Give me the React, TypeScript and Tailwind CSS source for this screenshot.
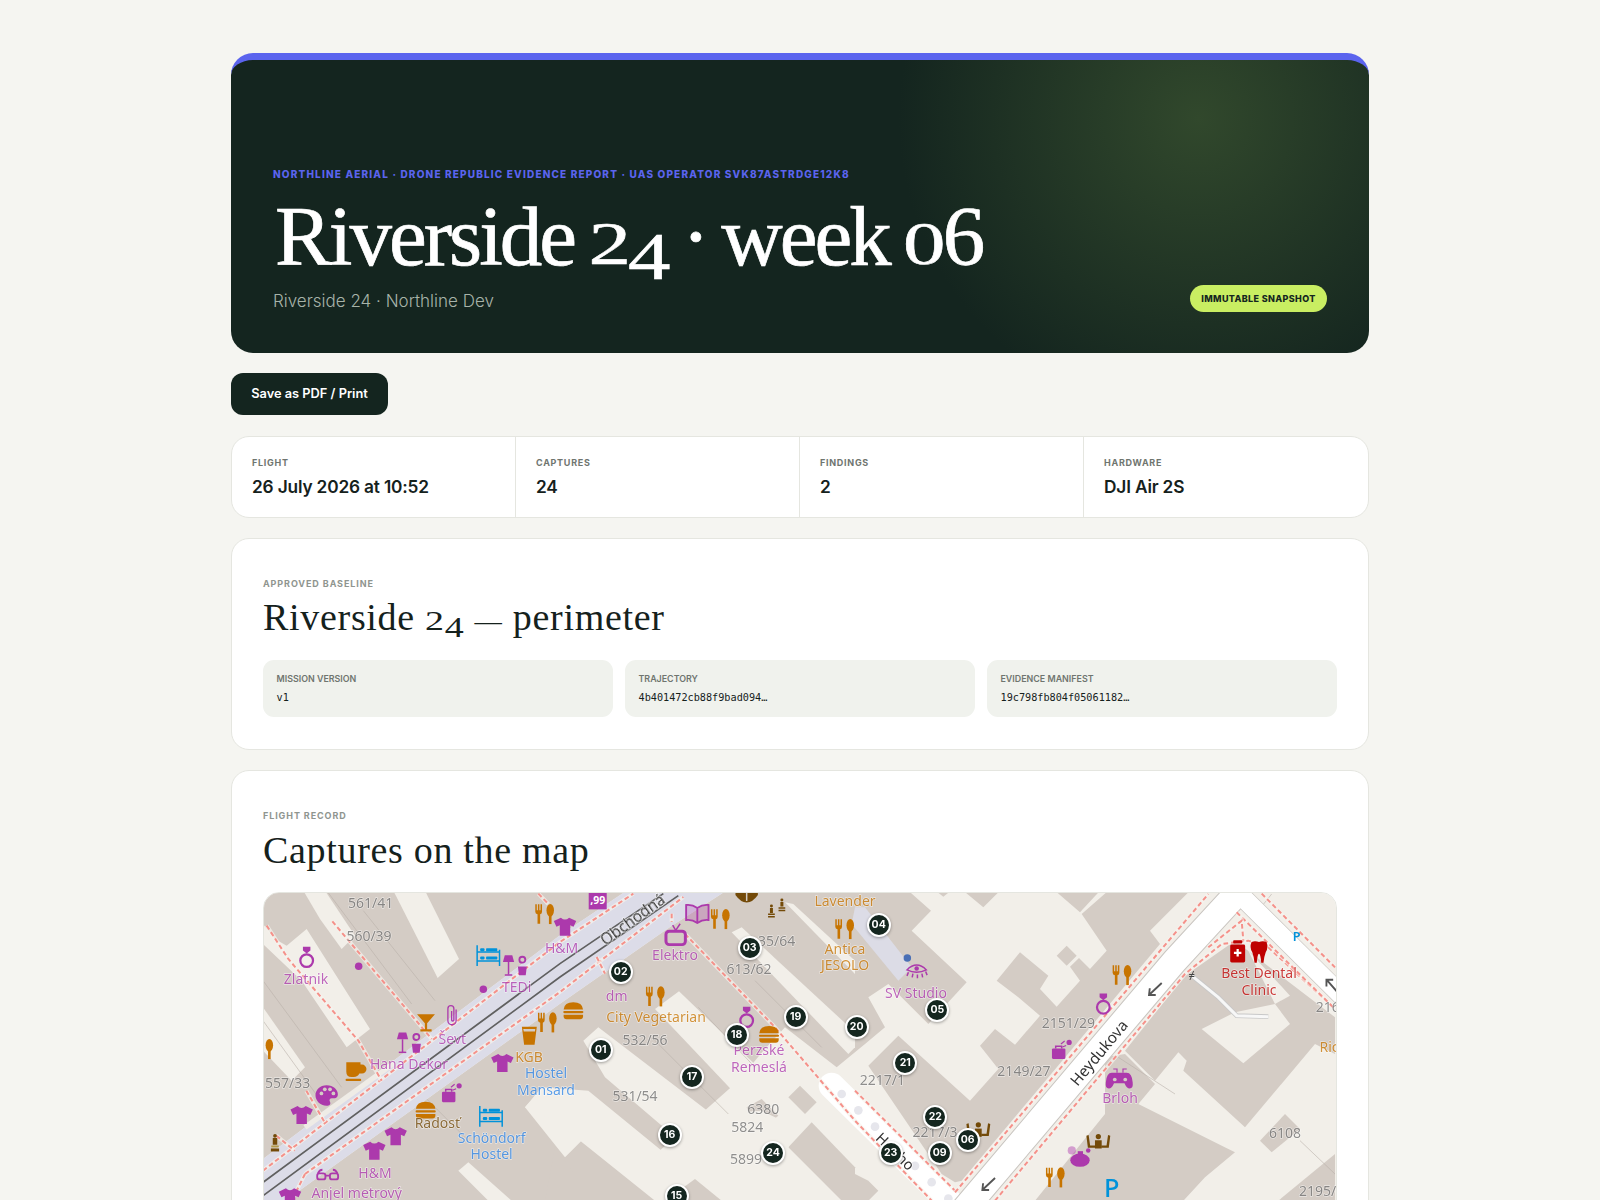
import * as React from "react"

const PURPLE = "#ac39ac"
const ORANGE = "#c77400"
const BLUE = "#0092da"
const RED = "#bf0000"
const BROWN = "#734a08"
const TAN = "#d4ccc5"
const LIGHT = "#f2efe9"

// old style figures, the serif we have only ships lining ones
const Osf = ({ text }: { text: string }) => (
  <>
    {text.split("").map((c, i) => {
      if (c === "2" || c === "0")
        return <span key={i} className="inline-block origin-[50%_79%] scale-y-[0.72]">{c}</span>
      if (c === "4")
        return <span key={i} className="inline-block origin-[50%_79%] translate-y-[0.17em] scale-y-[0.8]">{c}</span>
      if (c === "—") return <span key={i} className="text-[0.72em]">{c}</span>
      return <React.Fragment key={i}>{c}</React.Fragment>
    })}
  </>
)

const stats = [
  { label: "FLIGHT", value: "26 July 2026 at 10:52" },
  { label: "CAPTURES", value: "24" },
  { label: "FINDINGS", value: "2" },
  { label: "HARDWARE", value: "DJI Air 2S" },
]

const baseline = [
  { label: "MISSION VERSION", value: "v1" },
  { label: "TRAJECTORY", value: "4b401472cb88f9bad094…" },
  { label: "EVIDENCE MANIFEST", value: "19c798fb804f05061182…" },
]

// page coordinates of the capture pins
const pins: [string, number, number][] = [
  ["01", 600.7, 1049],
  ["02", 620.7, 971],
  ["03", 749.7, 947.7],
  ["04", 878.7, 924.3],
  ["05", 937.3, 1009.7],
  ["06", 967.7, 1139],
  ["09", 939.7, 1152.3],
  ["15", 676.7, 1195],
  ["16", 669.7, 1134.3],
  ["17", 692, 1076.7],
  ["18", 736.7, 1034.3],
  ["19", 795.7, 1016.7],
  ["20", 856.7, 1026.7],
  ["21", 905.3, 1062.3],
  ["22", 935.3, 1116.7],
  ["23", 890.7, 1152.3],
  ["24", 773, 1152.3],
]

const icons: Record<string, React.ReactNode> = {
  shirt: <path fill={PURPLE} d="M-11 -24 L-30 -15 L-23 0 L-14 -4 L-14 24 L14 24 L14 -4 L23 0 L30 -15 L11 -24 Q0 -14 -11 -24Z" />,
  forks: (
    <g fill={ORANGE}>
      <path d="M-26 -26h4v16h3v-16h4v16h3v-16h4v20q0 6-5 7v25h-7v-25q-6-1-6-7z" />
      <ellipse cx="14" cy="-10" rx="10" ry="17" />
      <rect x="10.5" y="4" width="7" height="23" />
    </g>
  ),
  knife: (
    <g fill={ORANGE}>
      <ellipse cy="-10" rx="10" ry="17" />
      <rect x="-3.5" y="4" width="7" height="23" />
    </g>
  ),
  hostel: (
    <g fill={BLUE}>
      <path d="M-30 -28v56M30 -16v44M-30 -10h60M-30 14h60" stroke={BLUE} strokeWidth="4" fill="none" />
      <rect x="-22" y="-20" width="12" height="8" rx="3" />
      <rect x="-6" y="-20" width="30" height="8" rx="2" />
      <rect x="-22" y="2" width="12" height="8" rx="3" />
      <rect x="-6" y="2" width="30" height="8" rx="2" />
    </g>
  ),
  burger: (
    <g fill={ORANGE}>
      <path d="M-26 -5q2 -19 26 -19t26 19z" />
      <rect x="-27" y="-1" width="54" height="6" rx="3" />
      <path d="M-26 9h52v4q0 8-8 8h-36q-8 0-8-8z" />
    </g>
  ),
  ring: (
    <g fill={PURPLE}>
      <circle cy="7" r="17" fill="none" stroke={PURPLE} strokeWidth="6" />
      <path d="M-10 -30h20v10l-10 8-10-8z" />
    </g>
  ),
  lamps: (
    <g fill={PURPLE}>
      <path d="M-30 -28h20l5 18h-30z" />
      <rect x="-22" y="-10" width="4" height="34" />
      <rect x="-30" y="23" width="20" height="4" />
      <circle cx="17" cy="-16" r="8" fill="none" stroke={PURPLE} strokeWidth="5" />
      <path d="M5 2h24l-3 24h-18z" />
    </g>
  ),
  clip: <path d="M11 -14v30a11 11 0 0 1-22 0v-32a8 8 0 0 1 16 0v30a3 3 0 0 1-6 0v-24" fill="none" stroke={PURPLE} strokeWidth="3.5" />,
  cocktail: <path fill={ORANGE} d="M-24 -24h48l-21 24v16h12v6h-30v-6h12v-16z" />,
  coffee: (
    <g fill={ORANGE}>
      <path d="M-26 -24h38v6h4a11 11 0 0 1 0 24h-7q-4 9-15 9h-6q-14 0-14-14z" />
      <rect x="-28" y="20" width="42" height="6" rx="3" />
    </g>
  ),
  beer: <path fill={ORANGE} d="M-20 -24h40l-6 48h-28z M-16 -18l1 7h30l1-7z" fillRule="evenodd" />,
  palette: (
    <g>
      <path fill={PURPLE} d="M0 -28c18 0 30 12 30 24 0 10-8 12-16 11-6 0-8 5-5 10 3 6-2 10-9 10-18 0-30-14-30-28s12-27 30-27z" />
      <circle cx="-14" cy="-6" r="5" fill={TAN} />
      <circle cx="-5" cy="-17" r="5" fill={TAN} />
      <circle cx="9" cy="-17" r="5" fill={TAN} />
      <circle cx="18" cy="-6" r="5" fill={TAN} />
    </g>
  ),
  book: <path d="M0 -16q-14 -10 -30 -8v40q16 -2 30 8q14 -10 30 -8v-40q-16 -2 -30 8zM0 -16v40" fill={PURPLE} fillOpacity="0.25" stroke={PURPLE} strokeWidth="5" />,
  tv: (
    <g fill="none" stroke={PURPLE}>
      <rect x="-26" y="-12" width="52" height="36" rx="9" strokeWidth="8" />
      <path d="M-8 -28L0 -14L12 -32" strokeWidth="4" />
    </g>
  ),
  tooth: <path fill={RED} d="M-20 -28q10 -4 20 0q10 -4 20 0q6 14 -2 28q-4 10 -6 28h-6q-2 -24 -6 -24t-6 24h-6q-2 -18 -6 -28q-8 -14 -2 -28z" />,
  medkit: (
    <g>
      <rect x="-20" y="-18" width="40" height="48" rx="4" fill={RED} />
      <rect x="-12" y="-30" width="24" height="9" rx="2" fill={RED} />
      <path d="M-3 -6h6v7h7v6h-7v7h-6v-7h-7v-6h7z" fill="#fff" />
    </g>
  ),
  game: (
    <g fill={PURPLE}>
      <path d="M-18 -14h36q14 0 16 26q2 16 -8 16q-8 0-14-14h-28q-6 14-14 14q-10 0-8-16q2-26 16-26z" />
      <path d="M-8 -14v-10h-10M8 -14v-10h10" fill="none" stroke={PURPLE} strokeWidth="3" />
      <circle cx="-14" cy="4" r="5" fill={TAN} />
      <circle cx="14" cy="4" r="5" fill={TAN} />
    </g>
  ),
  perfume: (
    <g fill={PURPLE}>
      <ellipse cy="12" rx="26" ry="18" />
      <rect x="-6" y="-12" width="14" height="10" />
      <circle cx="22" cy="-14" r="6" />
      <circle cx="-22" cy="-14" r="11" opacity="0.45" />
    </g>
  ),
  bag: (
    <g fill={PURPLE}>
      <rect x="-26" y="-6" width="36" height="28" rx="3" />
      <path d="M-16 -6v-6h16v6" fill="none" stroke={PURPLE} strokeWidth="4" />
      <circle cx="20" cy="-22" r="7" />
      <path d="M-2 -18l10-8M2 -10l10-4" stroke={PURPLE} strokeWidth="3" />
    </g>
  ),
  glasses: (
    <g fill="none" stroke={PURPLE} strokeWidth="5">
      <rect x="-28" y="-6" width="22" height="16" rx="6" />
      <rect x="6" y="-6" width="22" height="16" rx="6" />
      <path d="M-6 0h12M-26 -6q4 -10 12 -10M26 -6q-4 -10 -12 -10" />
    </g>
  ),
  eye: (
    <g fill="none" stroke={PURPLE} strokeWidth="4">
      <path d="M-26 -2q26 -26 52 0q-26 12 -52 0z" />
      <circle cy="-6" r="6" fill={PURPLE} stroke="none" />
      <path d="M-22 4l-4 10M-10 8l-2 10M2 10v10M14 8l2 10M24 2l4 10" />
    </g>
  ),
  statue: (
    <g fill={BROWN}>
      <circle cy="-22" r="5" />
      <path d="M-6 -16h12v18h-12z" />
      <rect x="-10" y="4" width="20" height="5" fill="#b49a4a" />
      <rect x="-11" y="12" width="22" height="8" />
    </g>
  ),
  statues: (
    <g fill={BROWN}>
      <circle cx="-14" cy="-8" r="4" />
      <path d="M-18 -3h8v14h-8zM-23 12h18v4h-18zM-23 19h18v4h-18z" />
      <circle cx="14" cy="-24" r="4" />
      <path d="M10 -19h8v12h-8zM5 -5h18v4h-18zM5 2h18v4h-18z" />
    </g>
  ),
  hands: (
    <g fill={BROWN}>
      <circle cy="-20" r="7" />
      <rect x="-9" y="-10" width="18" height="22" />
      <path d="M-26 -24l4 28h14v6h-20l-4-32zM26 -24l-4 28h-14v6h20l4-32z" />
    </g>
  ),
  shelf: (
    <g fill={BROWN}>
      <path d="M-30 -22h60v14q-14 20-30 20t-30-20z" />
      <rect x="-2" y="-22" width="4" height="30" fill={TAN} />
    </g>
  ),
  price: (
    <g>
      <rect x="-24" y="-24" width="48" height="44" fill={PURPLE} />
      <text textAnchor="middle" y="8" fontSize="28" fill="#fff" fontWeight="700" fontFamily="Noto Sans, sans-serif">,99</text>
    </g>
  ),
  dot: <circle r="10" fill={PURPLE} />,
  bluedot: <circle r="10" fill="#4a6fb5" />,
  arrow: <path d="M18 -16L-14 14M2 16L-16 16L-14 -2" stroke="#555" strokeWidth="5" fill="none" />,
  arrowUp: <path d="M16 18L-12 -14M-14 2L-14 -16L4 -16" stroke="#555" strokeWidth="5" fill="none" />,
}

const placed: [string, number, number][] = [
  ["ring", 155, 232], ["dot", 311, 257], ["hostel", 700, 225], ["lamps", 783, 255], ["dot", 685, 326],
  ["forks", 870, 100], ["clip", 591, 402], ["cocktail", 513, 428], ["lamps", 465, 487], ["shirt", 742, 547],
  ["forks", 878, 425], ["beer", 823, 465], ["coffee", 303, 572], ["palette", 215, 645], ["shirt", 140, 703],
  ["knife", 43, 505], ["statue", 60, 790], ["bag", 590, 640], ["burger", 512, 690], ["hostel", 708, 707], ["shirt", 422, 767],
  ["shirt", 358, 810], ["glasses", 218, 885], ["shirt", 105, 950],
  ["price", 1028, 62], ["shirt", 930, 138], ["book", 1327, 100], ["forks", 1397, 115], ["shelf", 1475, 52],
  ["statues", 1565, 85], ["tv", 1262, 165], ["forks", 1770, 145], ["forks", 1202, 347], ["burger", 955, 392],
  ["ring", 1475, 412], ["burger", 1542, 463],
  ["eye", 1985, 270], ["bluedot", 1957, 232], ["ring", 2545, 372], ["bag", 2420, 510], ["hands", 2170, 755],
  ["forks", 2402, 890], ["perfume", 2475, 825], ["hands", 2530, 790],
  ["forks", 2602, 283], ["medkit", 2948, 212], ["tooth", 3012, 215], ["game", 2595, 592],
  ["arrow", 2700, 325], ["arrow", 2200, 910], ["arrowUp", 3230, 315],
]

type Label = [string, number, number, string]
const GREY = "#6e6e6e"
const labels: Label[] = [
  ["561/41", 347, 70, GREY], ["560/39", 342, 170, GREY], ["557/33", 98, 610, GREY],
  ["35/64", 1565, 185, GREY], ["613/62", 1482, 270, GREY], ["532/56", 1170, 482, GREY],
  ["531/54", 1140, 650, GREY], ["6380", 1525, 690, GREY], ["5824", 1477, 742, GREY], ["5899", 1473, 840, GREY],
  ["2151/29", 2440, 432, GREY], ["2149/27", 2307, 575, GREY], ["2217/1", 1882, 603, GREY], ["2217/3", 2040, 758, GREY],
  ["216", 3218, 382, GREY], ["6108", 3090, 760, GREY], ["2195/", 3188, 935, GREY],
  ["Zlatnik", 153, 298, PURPLE], ["TEDi", 785, 322, PURPLE], ["Ševt", 592, 480, PURPLE], ["Hana Dekor", 462, 555, PURPLE],
  ["H&M", 360, 882, PURPLE], ["Anjel metrový", 305, 940, PURPLE], ["H&M", 920, 205, PURPLE], ["Elektro", 1260, 227, PURPLE],
  ["dm", 1085, 350, PURPLE], ["Perzské", 1512, 513, PURPLE], ["Remeslá", 1512, 563, PURPLE], ["SV Studio", 1983, 340, PURPLE],
  ["Brloh", 2595, 655, PURPLE],
  ["KGB", 822, 532, ORANGE], ["City Vegetarian", 1203, 412, ORANGE], ["Lavender", 1770, 65, ORANGE], ["Antica", 1770, 208, ORANGE],
  ["JESOLO", 1770, 258, ORANGE], ["Ric", 3222, 503, ORANGE], ["Radosť", 547, 732, BROWN],
  ["Hostel", 873, 580, "#2b84e8"], ["Mansard", 873, 632, "#2b84e8"], ["Schöndorf", 710, 775, "#2b84e8"], ["Hostel", 710, 825, "#2b84e8"],
  ["Best Dental", 3012, 282, RED], ["Clinic", 3012, 333, RED],
]

const tan = [
  "24,30 1115,30 915,164 24,835",
  "24,1400 24,1008 915,369 1245,139 1414,30 1960,30 2028,90 1970,150 2135,305 2020,430 1900,310 1840,350 1890,440 1830,490 1745,560 1590,440 1525,510 1450,600 1180,840 1300,1400",
  // block between the courtyard and Heydukova
  "1840,555 1930,465 2145,660 2230,565 2175,495 2220,445 2280,492 2355,405 2290,350 2225,300 2295,215 2380,285 2355,325 2405,378 2475,300 2445,258 2472,232 2505,265 2555,210 2480,100 2560,30 2805,30 2685,150 2715,190 2120,900 2100,905 2060,880",
  "2042,30 2065,48 2088,30",
  "2125,30 2185,80 2235,30",
  "2400,30 2535,30 2475,95",
  "2405,225 2435,195 2465,225 2435,255",
  "1800,880 1840,900 1870,930 1840,960 1800,960",
  // small blocks on the light strip
  "1600,650 1635,615 1685,665 1650,700",
  "1475,680 1520,655 1570,705 1500,760",
  "1460,845 1510,800 1540,850 1490,895",
  "1600,800 1670,725 1800,860 1800,1000 1690,1000",
  "1230,960 1320,895 1400,960",
  "900,800 980,910 920,970 870,960",
  // south of Heydukova
  "2610,510 2790,285 2940,180 3240,410 3240,520 3180,490 2970,740 2785,570 2795,540 2770,515 2700,600",
  "2550,530 2610,520 2700,610 2650,670 2940,815 2850,890 2785,960 2340,960 2550,700",
  "3015,780 3090,700 3135,745 3050,815",
  "3240,820 3070,960 3240,960",
]

const light = [
  "24,130 60,175 95,195 155,145 345,445 275,500 140,300 24,190",
  "145,30 210,30 300,165 260,205 195,115",
  "415,30 510,30 612,235 548,292",
  "24,380 150,560 110,600 24,510",
  "610,870 640,845 770,960 700,960",
  "810,680 865,620 900,670 990,770 930,830",
  // long strips running towards Hodzova
  "1200,385 1272,332 1540,590 1470,670",
  "985,480 1030,440 1370,700 1520,690 1620,740 1600,800 1800,1000 1460,1000 1320,820 1050,590",
  "810,680 860,620 1000,630 1275,855 1240,960 1200,960 900,720",
  "1430,155 1460,140 1800,455 1800,500 1780,520",
  "1590,65 1615,70 1800,240 1800,280",
  "3105,700 3185,615 3240,660 3240,760 3215,810",
]

const lines = [
  "215,30 470,370", "325,90 540,360", "24,300 260,620", "24,420 190,650", "480,620 640,780",
  "1200,480 1420,700", "1330,380 1500,560", "1500,300 1700,500",
  "2590,530 2760,640", "3135,780 3240,880", "3050,40 3010,90",
]

const Dashed = ({ points }: { points: string }) => (
  <g fill="none">
    <polyline points={points} stroke="#f7f4ee" strokeWidth="12" opacity="0.7" />
    <polyline points={points} stroke="#f5918a" strokeWidth="6" strokeDasharray="14 9" />
  </g>
)

const MapArt = () => (
  <svg viewBox="27 37 3216 1320" className="block h-full w-full blur-[0.5px]" preserveAspectRatio="xMinYMin slice">
    <rect x="0" y="0" width="3300" height="1400" fill={LIGHT} />
    {tan.map((p, i) => <polygon key={i} points={p} fill={TAN} />)}
    {light.map((p, i) => <polygon key={i} points={p} fill={LIGHT} />)}
    <polygon points="2980,210 3105,345 3060,370 2940,395 2840,445 2965,548 3105,430 3060,370" fill={LIGHT} />
    {lines.map((l, i) => <polyline key={i} points={l} fill="none" stroke="#b8b0a8" strokeWidth="2.5" opacity="0.7" />)}

    {/* pedestrian area by the pins 04 */}
    <polygon points="1800,80 1830,80 1970,260 1930,300 1790,130" fill="#dcdce6" />

    {/* Obchodna */}
    <polygon points="24,835 915,164 1115,30 1414,30 1245,139 915,369 24,1008" fill="#dcdce8" />
    <polyline points="150,740 420,545" fill="none" stroke="#efece6" strokeWidth="16" />
    <polyline points="24,905 915,249 1225,39" fill="none" stroke="#606060" strokeWidth="5" />
    <polyline points="24,945 915,289 1270,45" fill="none" stroke="#606060" strokeWidth="5" />

    {/* Hodzova, Heydukova and the cross street */}
    <polyline points="1730,615 2150,1030" fill="none" stroke="#fff" strokeWidth="78" strokeLinecap="round" />
    {[1760, 1810, 1860, 1980, 2030, 2080].map((x) => <circle key={x} cx={x} cy={640 + (x - 1760) * 0.98} r="13" fill="#e6e6ec" />)}
    <polyline points="2120,995 2760,240 2945,39 2955,25" fill="none" stroke="#c9c5c0" strokeWidth="82" />
    <polyline points="2930,17 3260,345" fill="none" stroke="#c9c5c0" strokeWidth="60" />
    <polyline points="2120,995 2760,240 2945,39 2955,25" fill="none" stroke="#fff" strokeWidth="76" />
    <polyline points="2930,17 3260,345" fill="none" stroke="#fff" strokeWidth="56" />

    <Dashed points="24,870 915,184 1135,39" />
    <Dashed points="150,880 915,334 1285,49" />
    <Dashed points="35,135 100,235 310,480 380,600" />
    <Dashed points="232,122 530,475" />
    <Dashed points="850,39 880,70" />
    <Dashed points="154,630 209,725" />
    <Dashed points="64,765 119,810" />
    <Dashed points="150,880 110,960" />
    <Dashed points="1025,229 1050,279" />
    <Dashed points="1250,99 1250,124" />
    <Dashed points="1290,160 1560,440 1800,720 2030,960" />
    <Dashed points="1800,630 2100,930" />
    <Dashed points="2100,935 2860,40" />
    <Dashed points="2220,960 2790,280 2900,190 2980,180 3040,200 3240,385" />
    <Dashed points="2945,95 3240,385" />
    <Dashed points="2860,200 2960,120 2965,180" />
    <Dashed points="3020,39 3240,260" />

    {/* service path */}
    <polyline points="2810,285 2890,350 2945,405 3040,408" fill="none" stroke="#c8c8c8" strokeWidth="14" />
    <polyline points="2810,285 2890,350 2945,405 3040,408" fill="none" stroke="#f7f7f7" strokeWidth="9" />
    <text x="2810" y="295" textAnchor="middle" fontSize="34" fill="#444" fontFamily="Noto Sans, sans-serif">≠</text>

    {placed.map(([name, x, y], i) => <g key={i} transform={`translate(${x} ${y}) scale(1.12)`}>{icons[name]}</g>)}

    <g fontFamily="Noto Sans, sans-serif" fontSize="42" textAnchor="middle" dominantBaseline="middle" strokeLinejoin="round" style={{ paintOrder: "stroke" }}>
      {labels.map(([t, x, y, c], i) => <text key={i} x={x} y={y} fill={c} opacity="0.75" stroke="#fff" strokeOpacity="0.7" strokeWidth="4">{t}</text>)}
      <text x="3125" y="172" fill={BLUE} fontSize="38" fontWeight="600">P</text>
      <text x="2570" y="930" fill={BLUE} fontSize="76" fontWeight="500">P</text>
      <text transform="translate(1135 120) rotate(-36)" fill="#333" fontSize="46" stroke="#fff" strokeOpacity="0.8" strokeWidth="5">Obchodná</text>
      <text transform="translate(2535 519) rotate(-50)" fill="#333" fontSize="46" stroke="#fff" strokeOpacity="0.8" strokeWidth="5">Heydukova</text>
      <text transform="translate(1918 815) rotate(44)" fill="#333" fontSize="44" stroke="#fff" strokeOpacity="0.8" strokeWidth="5">Hodho</text>
    </g>
  </svg>
)

const Label = ({ children }: { children: React.ReactNode }) => (
  <div className="text-[9px] font-bold leading-3 tracking-[0.1em] text-[#8f958f]">{children}</div>
)

export default function App() {
  return (
    <div className="min-h-screen bg-[#f5f5f1] font-['Inter',sans-serif] text-[#15211c]">
      <div className="mx-auto flex w-[1138px] flex-col gap-5 pt-[53px] pb-10">
        <header className="flex h-[300px] items-end justify-between rounded-[22px] border-t-[7px] border-[#5b64ee] bg-[radial-gradient(circle_300px_at_85%_20%,#31482c,#14251f)] px-[42px] pb-[41px]">
          <div>
            <div className="text-[10px] font-extrabold leading-4 tracking-[0.117em] text-[#5b64ee]">
              NORTHLINE AERIAL · DRONE REPUBLIC EVIDENCE REPORT · UAS OPERATOR SVK87ASTRDGE12K8
            </div>
            <h1 className="mt-3 ml-[2px] h-[84px] font-['Liberation_Serif',serif] text-[85px] leading-[84px] tracking-[-0.035em] text-white [word-spacing:-4px] [-webkit-text-stroke:0.7px_white]">
              <Osf text="Riverside 24 · week 06" />
            </h1>
            <p className="mt-[10px] translate-y-px text-[17px] font-light leading-6 text-[#a7b3a9]">Riverside 24 · Northline Dev</p>
          </div>
          <span className="flex h-[27px] w-[137px] items-center justify-center rounded-full bg-[#c9ee62] text-[9px] font-extrabold tracking-[0.04em] text-[#15261f]">
            IMMUTABLE SNAPSHOT
          </span>
        </header>

        <button className="mb-px h-[42px] w-[157px] rounded-[12px] bg-[#14251f] text-[12.8px] font-semibold text-white">
          Save as PDF / Print
        </button>

        <section className="grid h-[82px] grid-cols-4 rounded-[18px] border border-[#e5e6e0] bg-white">
          {stats.map((s, i) => (
            <div key={s.label} className={i ? "-ml-px border-l border-[#e5e6e0] pt-5 pl-5" : "pt-5 pl-5"}>
              <div className="text-[9px] font-bold leading-3 tracking-[0.08em] text-[#6f756f]">{s.label}</div>
              <div className="mt-[6px] text-[17.3px] font-semibold leading-6 tracking-[-0.01em]">{s.value}</div>
            </div>
          ))}
        </section>

        <section className="h-[212px] rounded-[18px] border border-[#e5e6e0] bg-white px-[31px] pt-[39px]">
          <Label>APPROVED BASELINE</Label>
          <h2 className="mt-[4px] h-[46px] font-['Liberation_Serif',serif] text-[38px] leading-[46px] tracking-[0.018em]">
            <Osf text="Riverside 24 — perimeter" />
          </h2>
          <div className="mt-[20px] grid grid-cols-3 gap-3">
            {baseline.map((b) => (
              <div key={b.label} className="h-[57px] rounded-[11px] bg-[#f0f2ed] px-[13.5px] pt-[13px]">
                <div className="text-[8.9px] font-semibold leading-3 text-[#6f756f]">{b.label}</div>
                <div className="mt-[6px] font-['DejaVu_Sans_Mono',monospace] text-[10.2px] leading-[14px]">{b.value}</div>
              </div>
            ))}
          </div>
        </section>

        <section className="rounded-[18px] border border-[#e5e6e0] bg-white px-[31px] pt-[39px] pb-8">
          <Label>FLIGHT RECORD</Label>
          <h2 className="mt-[5px] font-['Liberation_Serif',serif] text-[38px] leading-[46px] tracking-[0.018em]">Captures on the map</h2>
          <div className="relative mt-[19px] h-[442px] overflow-hidden rounded-[16px] border border-[#e5e6e0]">
            <MapArt />
            {pins.map(([n, x, y]) => (
              <span
                key={n}
                className="absolute flex h-[24px] w-[24px] -translate-x-1/2 -translate-y-1/2 items-center justify-center rounded-full border-2 border-white bg-[#14261f] text-[10.5px] font-bold text-white shadow-[0_1px_3px_rgba(0,0,0,0.35)]"
                style={{ left: x - 264, top: y - 892.5 }}
              >
                {n}
              </span>
            ))}
          </div>
        </section>
      </div>
    </div>
  )
}
